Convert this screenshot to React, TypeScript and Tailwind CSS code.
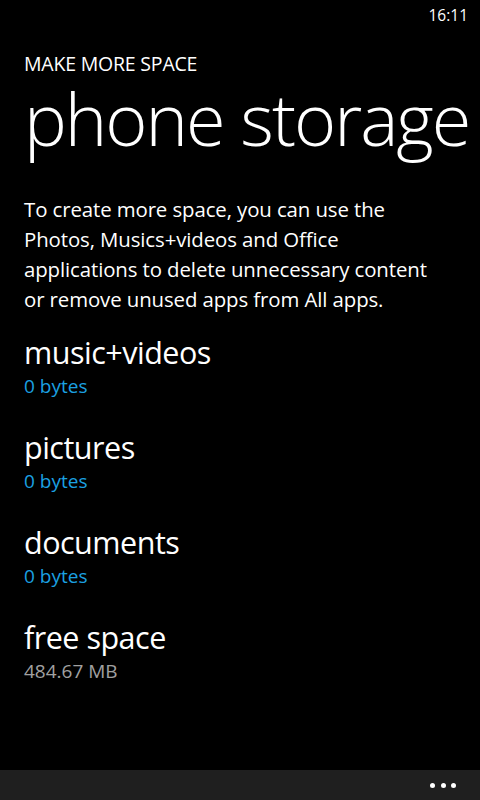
export default function App() {
  const items = [
    { name: 'music+videos', size: '0 bytes', accent: true },
    { name: 'pictures', size: '0 bytes', accent: true },
    { name: 'documents', size: '0 bytes', accent: true },
    { name: 'free space', size: '484.67 MB', accent: false },
  ];

  return (
    <div
      className="w-[480px] h-[800px] bg-black text-white flex flex-col overflow-hidden"
      style={{ fontFamily: '"Open Sans", "Noto Sans", sans-serif' }}
    >
      <div className="h-[32px] flex justify-end items-center pr-[12px] text-[15.5px]">16:11</div>

      <div className="px-[24px]">
        <div className="mt-[17px] text-[19.5px] leading-[29px] tracking-[-0.2px]">MAKE MORE SPACE</div>
        <div className="text-[72px] leading-[80px] font-light tracking-[-2px] whitespace-nowrap">
          phone storage
        </div>

        <p className="mt-[36px] w-[415px] text-[20.4px] leading-[30px] tracking-[-0.1px]">
          To create more space, you can use the Photos, Musics+videos and Office applications to delete
          unnecessary content or remove unused apps from All apps.
        </p>

        <div className="mt-[18px] flex flex-col">
          {items.map((item) => (
            <div key={item.name} className="h-[95px]">
              <div className="text-[30.5px] leading-[40px] tracking-[-0.5px]">{item.name}</div>
              <div
                className={
                  item.accent
                    ? 'text-[19px] leading-[29px] text-[#1ba1e2]'
                    : 'text-[19px] leading-[29px] text-[#a0a0a0]'
                }
              >
                {item.size}
              </div>
            </div>
          ))}
        </div>
      </div>

      <div className="mt-auto h-[30px] bg-[#1f1f1f] flex justify-end items-center gap-[5.5px] pr-[24px]">
        <span className="w-[5px] h-[5px] rounded-full bg-white" />
        <span className="w-[5px] h-[5px] rounded-full bg-white" />
        <span className="w-[5px] h-[5px] rounded-full bg-white" />
      </div>
    </div>
  );
}
